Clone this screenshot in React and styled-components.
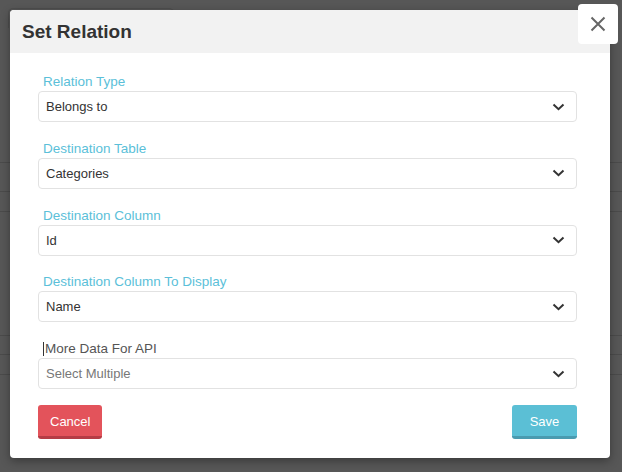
import React from 'react';
import styled, { createGlobalStyle } from 'styled-components';

const GlobalStyle = createGlobalStyle`
  html, body {
    margin: 0;
    padding: 0;
    background: #575757;
    font-family: "Liberation Sans", Arial, sans-serif;
  }
  * { box-sizing: border-box; }
`;

// Dimmed page behind the dialog
const Backdrop = styled.div`
  position: relative;
  width: 622px;
  height: 472px;
  overflow: hidden;
  background: #575757;
`;

const PageGhost = styled.div`
  display: flex;
  flex-direction: column;
  padding-top: 8px;
`;

const GhostTab = styled.div`
  width: 166px;
  height: 20px;
  margin-left: 8px;
  border: 1px solid #4e4e4e;
  border-bottom: none;
  border-radius: 5px 5px 0 0;
`;

const GhostRow = styled.div`
  height: ${p => p.h}px;
  border-bottom: 1px solid #4b4b4b;
`;

const Modal = styled.div`
  position: absolute;
  left: 10px;
  top: 10px;
  width: 600px;
  background: #fff;
  border-radius: 4px;
  box-shadow: 0 3px 10px rgba(0, 0, 0, 0.35);
  display: flex;
  flex-direction: column;
`;

const Header = styled.div`
  height: 43px;
  background: #f2f2f2;
  border-radius: 4px 4px 0 0;
  display: flex;
  align-items: center;
  padding: 0 12px;
`;

const Title = styled.h4`
  margin: 0;
  font-size: 19px;
  font-weight: bold;
  color: #333;
`;

const CloseButton = styled.button`
  position: absolute;
  top: -6px;
  right: -8px;
  width: 40px;
  height: 40px;
  border: none;
  border-radius: 4px;
  background: #fff;
  display: flex;
  align-items: center;
  justify-content: center;
  padding: 0;
  cursor: pointer;
`;

const Body = styled.div`
  padding: 21px 33px 19px 28px;
  display: flex;
  flex-direction: column;
`;

const FormGroup = styled.div`
  display: flex;
  flex-direction: column;
  margin-bottom: ${p => (p.last ? 16 : 18.75)}px;
`;

const Label = styled.label`
  display: flex;
  align-items: center;
  font-size: 13.5px;
  line-height: 16px;
  margin: 0 0 1px 5px;
  color: ${p => (p.muted ? '#555' : '#5bbfd9')};
`;

const Caret = styled.span`
  width: 1px;
  height: 14px;
  background: #333;
  margin-right: 1px;
`;

const Select = styled.div`
  height: 31px;
  border: 1px solid #e2e2e2;
  border-radius: 4px;
  background: #fff;
  display: flex;
  align-items: center;
  justify-content: space-between;
  padding: 0 11px 0 7px;
  font-size: 13px;
  color: ${p => (p.placeholder ? '#777' : '#333')};
`;

const Actions = styled.div`
  display: flex;
  justify-content: space-between;
`;

const Button = styled.button`
  height: 34px;
  min-width: ${p => p.w}px;
  padding: 2px 12px 0;
  border: none;
  border-bottom: 3px solid ${p => p.edge};
  border-radius: 3px;
  background: ${p => p.bg};
  color: #fff;
  font-family: inherit;
  font-size: 13px;
  cursor: pointer;
`;

const Chevron = () => (
  <svg width="13" height="8" viewBox="0 0 13 8">
    <path d="M1.5 1.5 L6.5 6.2 L11.5 1.5" fill="none" stroke="#333" strokeWidth="2" />
  </svg>
);

const fields = [
  { label: 'Relation Type', value: 'Belongs to' },
  { label: 'Destination Table', value: 'Categories' },
  { label: 'Destination Column', value: 'Id' },
  { label: 'Destination Column To Display', value: 'Name' },
];

const App = () => (
  <Backdrop>
    <GlobalStyle />
    <PageGhost>
      <GhostTab />
      <GhostRow h={135} />
      <GhostRow h={29} />
      <GhostRow h={20} />
      <GhostRow h={124} />
      <GhostRow h={19} />
      <GhostRow h={20} />
    </PageGhost>
    <Modal>
      <Header>
        <Title>Set Relation</Title>
      </Header>
      <CloseButton aria-label="Close">
        <svg width="16" height="16" viewBox="0 0 16 16">
          <path d="M1.5 1.5 L14.5 14.5 M14.5 1.5 L1.5 14.5" stroke="#666" strokeWidth="2" />
        </svg>
      </CloseButton>
      <Body>
        {fields.map(f => (
          <FormGroup key={f.label}>
            <Label>{f.label}</Label>
            <Select>
              {f.value}
              <Chevron />
            </Select>
          </FormGroup>
        ))}
        <FormGroup last>
          <Label muted>
            <Caret />
            More Data For API
          </Label>
          <Select placeholder="true">
            Select Multiple
            <Chevron />
          </Select>
        </FormGroup>
        <Actions>
          <Button bg="#e3535b" edge="#b53c45" w={64}>Cancel</Button>
          <Button bg="#5bbfd5" edge="#4a9bb0" w={65}>Save</Button>
        </Actions>
      </Body>
    </Modal>
  </Backdrop>
);

export default App;
